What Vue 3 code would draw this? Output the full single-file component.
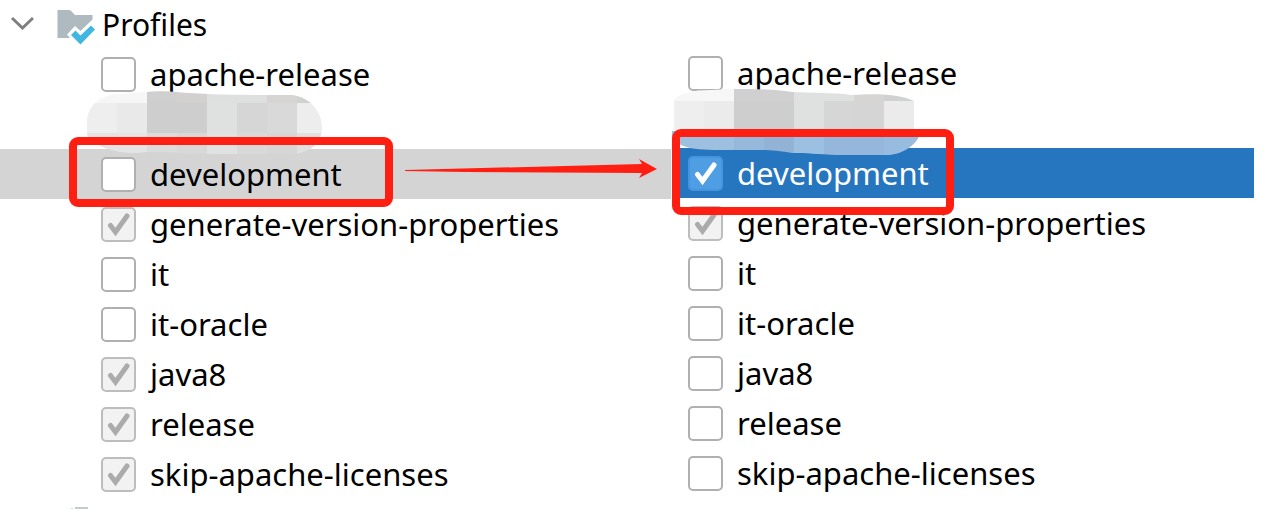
<script setup>
import { ref } from 'vue'

const cell = (x, y, w, h, fill) => ({ x, y, w, h, fill })

const panels = ref([
  {
    id: 'before',
    title: 'Profiles',
    rows: [
      { name: 'apache-release' },
      { name: '' },
      { name: 'development', selected: true },
      { name: 'generate-version-properties', checked: true, implied: true },
      { name: 'it' },
      { name: 'it-oracle' },
      { name: 'java8', checked: true, implied: true },
      { name: 'release', checked: true, implied: true },
      { name: 'skip-apache-licenses', checked: true, implied: true }
    ]
  },
  {
    id: 'after',
    rows: [
      { name: 'apache-release' },
      { name: '' },
      { name: 'development', selected: true, checked: true },
      { name: 'generate-version-properties', checked: true, implied: true },
      { name: 'it' },
      { name: 'it-oracle' },
      { name: 'java8' },
      { name: 'release' },
      { name: 'skip-apache-licenses' }
    ]
  }
])

const mosaics = {
  before: {
    shape: 'M0 31C0 14 14 4 32 3C54 2 70 -1 90 1C120 4 170 4 205 4C224 6 235 22 235 36C235 52 224 62 205 63H130C100 63 80 60 60 61C30 66 0 52 0 42Z',
    cells: [
      cell(0, 0, 60, 12, '#f6f6f6'), cell(60, 0, 30, 12, '#cfcfcf'), cell(90, 0, 30, 12, '#d3d1d0'),
      cell(120, 0, 60, 12, '#dee0df'), cell(180, 0, 30, 12, '#d7d5d3'), cell(210, 0, 30, 12, '#d0d2d1'),
      cell(0, 12, 30, 30, '#eeeeee'), cell(30, 12, 30, 30, '#e9e9e9'), cell(60, 12, 60, 30, '#cecece'),
      cell(120, 12, 30, 30, '#dee1e0'), cell(150, 12, 30, 30, '#d6d6d6'), cell(180, 12, 30, 30, '#d9d9d9'),
      cell(210, 12, 30, 30, '#ededed'),
      cell(0, 42, 60, 24, '#e4e4e4'), cell(60, 42, 30, 24, '#dcdcdc'), cell(90, 42, 30, 24, '#d8d8d8'),
      cell(120, 42, 30, 24, '#e0e2e1'), cell(150, 42, 30, 24, '#d9d9d9'), cell(180, 42, 30, 24, '#d6d6d6'),
      cell(210, 42, 30, 24, '#e0e0e0')
    ]
  },
  after: {
    shape: 'M2 11C8 4 20 1 40 1C70 -1 100 0 120 3C150 4 165 4 180 6C210 4 230 6 242 12V42H249C246 56 230 66 215 66H165C145 65 135 64 120 64C100 60 90 61 60 61C25 61 6 61 0 46V42H2Z',
    cells: [
      cell(0, 0, 62, 12, '#f7f7f7'), cell(62, 0, 60, 12, '#d0d0d0'), cell(122, 0, 60, 12, '#dfe1e0'),
      cell(182, 0, 30, 12, '#d7d5d4'), cell(212, 0, 32, 12, '#d0d2d1'),
      cell(0, 12, 32, 30, '#eeeeee'), cell(32, 12, 30, 30, '#ebebeb'), cell(62, 12, 60, 30, '#cecece'),
      cell(122, 12, 30, 30, '#dee1e0'), cell(152, 12, 30, 30, '#d6d6d6'), cell(182, 12, 30, 30, '#d5d5d5'),
      cell(212, 12, 30, 30, '#ebebeb'),
      cell(0, 42, 62, 24, '#9dbfe0'), cell(62, 42, 30, 24, '#96b8da'), cell(92, 42, 30, 24, '#92b3d5'),
      cell(122, 42, 30, 24, '#9bc0e2'), cell(152, 42, 60, 24, '#94b7db'), cell(212, 42, 40, 24, '#98bbe0')
    ]
  }
}
</script>

<template>
  <main class="compare">
    <section v-for="panel in panels" :key="panel.id" class="panel" :class="panel.id">
      <header v-if="panel.title" class="head">
        <button class="toggle" type="button" aria-label="Collapse Profiles">
          <svg width="24" height="14" viewBox="0 0 24 14"><path d="M2 2L12.500 12L23 2" fill="none" stroke="#7f7f7f" stroke-width="3" /></svg>
        </button>
        <svg class="folder" width="38" height="36" viewBox="0 0 38 36">
          <path d="M0.500 1H12C14 1 15 3 18 6H35.500V10.500L23.500 22L18 17L10 25.500L13 29H0.500Z" fill="#aeb9c0" />
          <path d="M14 26L18.500 21.500L23.500 26.500L34 16.500L38 20.500L23.500 35.500Z" fill="#40b6e0" />
        </svg>
        <h1>{{ panel.title }}</h1>
      </header>
      <ul class="rows">
        <li v-for="(row, i) in panel.rows" :key="i" class="row" :class="{ selected: row.selected }">
          <label v-if="row.name" class="item">
            <span class="box">
              <input v-model="row.checked" type="checkbox" :class="{ implied: row.implied }">
              <svg v-if="row.checked" viewBox="0 0 35 35"><path d="M9.500 18.500L14.500 25L26 9" /></svg>
            </span>
            <span>{{ row.name }}</span>
          </label>
          <svg v-else class="mosaic" width="252" height="68" viewBox="0 0 252 68" aria-hidden="true">
            <clipPath :id="'clip-' + panel.id"><path :d="mosaics[panel.id].shape" /></clipPath>
            <g :clip-path="`url(#clip-${panel.id})`" shape-rendering="crispEdges">
              <rect v-for="(c, k) in mosaics[panel.id].cells" :key="k" :x="c.x" :y="c.y" :width="c.w" :height="c.h" :fill="c.fill" />
            </g>
          </svg>
          <span v-if="row.selected" class="frame"></span>
          <svg v-if="row.selected && panel.title" class="arrow" width="252" height="20" viewBox="0 0 252 20" aria-hidden="true">
            <path d="M0 11L237 5L234 0L252 10L234 19L237 14L60 13L0 12Z" fill="#ff1f12" />
          </svg>
        </li>
      </ul>
      <svg v-if="panel.title" class="next" width="20" height="3" viewBox="0 0 20 3" aria-hidden="true">
        <path d="M1 1H3V2H1Z" fill="#d5dadd" /><path d="M5 0H18V2H5Z" fill="#c4cbd0" />
      </svg>
    </section>
  </main>
</template>

<style>
body {
  margin: 0;
  background: #fff;
}
</style>

<style scoped>
.compare {
  display: grid;
  grid-template-columns: 672fr 600fr;
  color: #000;
  font: 31px/50px "Noto Sans", "Open Sans", sans-serif;
}
.before {
  padding-right: 1px;
}
.after {
  padding: 48px 18px 0 0;
}
.head {
  display: flex;
  align-items: center;
  height: 49px;
  padding-left: 10px;
}
.toggle {
  display: flex;
  padding: 0;
  border: 0;
  background: none;
}
.toggle svg {
  margin-bottom: 4px;
}
.folder {
  margin: 4px 7px 0 23px;
}
h1 {
  margin: 0;
  font-size: 30px;
  font-weight: 400;
  line-height: 48px;
}
.rows {
  margin: 0;
  padding: 0;
  list-style: none;
}
.row {
  position: relative;
  height: 50px;
  padding-left: 101px;
}
.after .row {
  padding-left: 16px;
}
.item {
  display: flex;
  align-items: center;
  gap: 14px;
  height: 50px;
  white-space: nowrap;
}
.selected {
  background: #d4d4d4;
}
.after .selected {
  background: #2675bf;
  color: #fff;
}
.box {
  position: relative;
  display: flex;
  width: 35px;
  height: 35px;
}
.box input {
  appearance: none;
  box-sizing: border-box;
  width: 35px;
  height: 35px;
  margin: 0;
  border: 2px solid #b0b0b0;
  border-radius: 5px;
  background: #fff;
}
.box input.implied {
  border-color: #bdbdbd;
  background: #f2f2f2;
}
.after .selected input {
  border-color: #4494de;
  background: #4f9ee3;
}
.box svg {
  position: absolute;
  inset: 0;
  fill: none;
  stroke: #ababab;
  stroke-width: 5;
  stroke-linecap: round;
  pointer-events: none;
}
.after .selected .box svg {
  stroke: #fff;
}
.mosaic {
  position: absolute;
  z-index: 1;
  top: -8px;
  left: 87px;
}
.after .mosaic {
  top: -9px;
  left: 0;
}
.frame {
  position: absolute;
  z-index: 2;
  box-sizing: border-box;
  top: -12px;
  left: 69px;
  width: 324px;
  height: 70px;
  border: 8px solid #ff1f12;
  border-radius: 9px;
  pointer-events: none;
}
.after .frame {
  top: -19px;
  left: 0;
  width: 282px;
  height: 86px;
}
.arrow {
  position: absolute;
  z-index: 2;
  top: 10px;
  right: 14px;
}
.next {
  display: block;
  margin: 8px 0 0 70px;
}
</style>
